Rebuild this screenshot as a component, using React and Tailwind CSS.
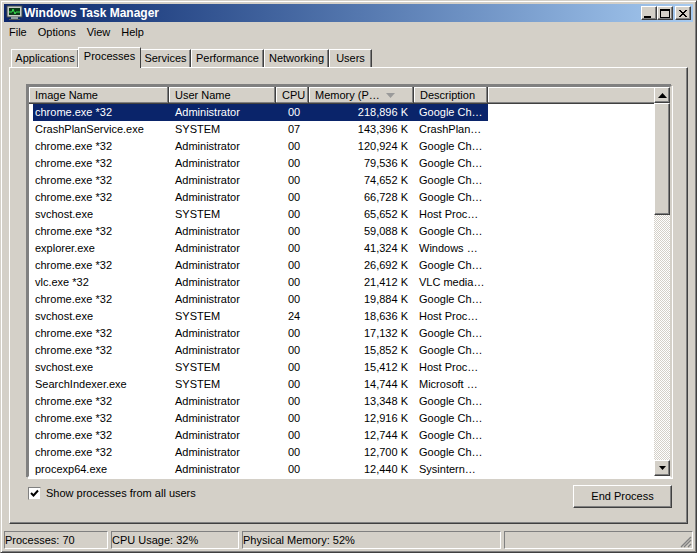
const C='chrome.exe *32',A='Administrator',S='SYSTEM',G='Google Ch…',H='Host Proc…';
const rows=[
[C,A,'00','218,896 K',G],['CrashPlanService.exe',S,'07','143,396 K','CrashPlan…'],[C,A,'00','120,924 K',G],[C,A,'00','79,536 K',G],[C,A,'00','74,652 K',G],[C,A,'00','66,728 K',G],
['svchost.exe',S,'00','65,652 K',H],[C,A,'00','59,088 K',G],['explorer.exe',A,'00','41,324 K','Windows …'],[C,A,'00','26,692 K',G],['vlc.exe *32',A,'00','21,412 K','VLC media…'],[C,A,'00','19,884 K',G],
['svchost.exe',S,'24','18,636 K',H],[C,A,'00','17,132 K',G],[C,A,'00','15,852 K',G],['svchost.exe',S,'00','15,412 K',H],['SearchIndexer.exe',S,'00','14,744 K','Microsoft …'],[C,A,'00','13,348 K',G],
[C,A,'00','12,916 K',G],[C,A,'00','12,744 K',G],[C,A,'00','12,700 K',G],['procexp64.exe',A,'00','12,440 K','Sysintern…']];
const raised='border border-t-white border-l-white border-r-[#404040] border-b-[#404040] shadow-[inset_-1px_-1px_0_#808080]';
const sunk='border border-t-[#808080] border-l-[#808080] border-r-white border-b-white';
function Cap({children}){return <div className={`w-4 h-[14px] bg-[#d4d0c8] flex items-center justify-center ${raised}`}>{children}</div>}
function Tab({w,active,children}){return <div className={active?`h-[21px] ${w} bg-[#d4d0c8] border border-b-0 border-t-white border-l-white border-r-[#404040] flex items-center justify-center -mx-px z-10 pb-[3px] relative top-px`:`h-[18px] ${w} bg-[#d4d0c8] border border-b-0 border-t-white border-l-white border-r-[#404040] shadow-[inset_-1px_0_0_#808080] flex items-center justify-center`}>{children}</div>}
function Head({w,children,right}){return <div className={`h-[17px] ${w} shrink-0 bg-[#d4d0c8] flex items-center justify-between pl-[6px] pr-[18px] pt-px border-r border-b border-r-[#404040] border-b-[#404040] shadow-[inset_-1px_-1px_0_#808080,inset_1px_1px_0_#fff] ${right||''}`}>{children}</div>}
export default function App(){return(
<div className="w-[697px] h-[553px] bg-[#d4d0c8] text-black text-[11px] leading-none flex flex-col overflow-hidden border border-t-[#d4d0c8] border-l-[#d4d0c8] border-r-[#404040] border-b-[#404040] shadow-[inset_1px_1px_0_#fff,inset_-1px_-1px_0_#808080] pt-[3px] px-[3px] pb-[3px]" style={{fontFamily:'"Liberation Sans",Arial,sans-serif'}}>
<div className="h-[18px] shrink-0 flex items-center justify-between bg-gradient-to-r from-[#0a246a] to-[#a6caf0] pl-[2px] pr-[2px]">
<div className="flex items-center gap-px">
<svg width="17" height="16" viewBox="0 0 17 16"><rect x="1" y="1" width="15" height="11" fill="#c8ccc8" stroke="#404848"/><rect x="3" y="3" width="11" height="7" fill="#0c3a18"/><path d="M3 7h3l1-3 2 5 1-2h4" fill="none" stroke="#38e050"/><rect x="5" y="12" width="7" height="2" fill="#90a0a0"/><rect x="3" y="14" width="11" height="1" fill="#505858"/></svg>
<span className="text-white font-bold text-[12px]">Windows Task Manager</span>
</div>
<div className="flex">
<Cap><span className="w-[7px] h-[2px] bg-black mt-[7px] -ml-1"/></Cap>
<Cap><span className="w-[10px] h-[9px] border border-black border-t-2"/></Cap>
<div className="ml-[2px]"><Cap><svg width="8" height="7" viewBox="0 0 8 7"><path d="M0 0l7 7M1 0l7 7M7 0L0 7M8 0L1 7" stroke="#000" strokeWidth="1"/></svg></Cap></div>
</div>
</div>
<div className="h-[19px] shrink-0 flex items-center gap-[11px] pl-[5px] pt-px"><span>File</span><span>Options</span><span>View</span><span>Help</span></div>
<div className="h-[7px] shrink-0"/>
<div className="h-[19px] shrink-0 flex items-end pl-[7px]">
<Tab w="w-[68px]">Applications</Tab><Tab w="w-[63px]" active>Processes</Tab><Tab w="w-[51px]">Services</Tab><Tab w="w-[73px]">Performance</Tab><Tab w="w-[65px]">Networking</Tab><Tab w="w-[43px]">Users</Tab>
</div>
<div className="w-[679px] h-[457px] shrink-0 ml-[5px] border border-t-white border-l-white border-r-[#404040] border-b-[#404040] shadow-[inset_-1px_-1px_0_#808080] pt-[17px] pl-[17px] flex flex-col">
<div className={`w-[645px] h-[393px] shrink-0 border-2 border-t-[#808080] border-l-[#808080] border-r-[#d4d0c8] border-b-white shadow-[-1px_-1px_0_#808080,1px_1px_0_#fff] flex bg-white`}>
<div className="flex-1 min-w-0 flex flex-col">
<div className="flex h-[17px] shrink-0 bg-[#d4d0c8]">
<Head w="w-[140px]">Image Name</Head><Head w="w-[107px]">User Name</Head><Head w="w-[33px]"><span>CPU</span></Head>
<Head w="w-[105px]" right="!pr-[18px]"><span>Memory (P…</span><svg width="9" height="5" viewBox="0 0 9 5"><path d="M0 0h9L4.5 5z" fill="#9a9a9a"/></svg></Head>
<Head w="w-[74px]">Description</Head><div className="flex-1 h-[17px] border-b border-b-[#404040] shadow-[inset_0_-1px_0_#808080,inset_1px_1px_0_#fff]"/>
</div>
<div className="flex-1 min-h-0 overflow-hidden pl-[4px]">
{rows.map((r,i)=><div key={i} className={`flex h-[17px] w-[455px] items-center ${i===0?'bg-[#0a246a] text-white':''}`}>
<span className="w-[136px] pl-[2px] shrink-0 whitespace-nowrap">{r[0]}</span>
<span className="w-[107px] pl-[6px] shrink-0">{r[1]}</span>
<span className="w-[33px] pl-[12px] shrink-0">{r[2]}</span>
<span className="w-[105px] pr-[6px] text-right shrink-0">{r[3]}</span>
<span className="w-[74px] pl-[5px] shrink-0 whitespace-nowrap">{r[4]}</span>
</div>)}
</div>
</div>
<div className="w-[16px] shrink-0 flex flex-col bg-[repeating-conic-gradient(#d4d0c8_0%_25%,#fff_0%_50%)] bg-[length:2px_2px]">
<div className={`h-[16px] shrink-0 bg-[#d4d0c8] flex items-center justify-center ${raised}`}><svg width="9" height="5" viewBox="0 0 9 5"><path d="M4.5 0L9 5H0z"/></svg></div>
<div className={`h-[112px] shrink-0 bg-[#d4d0c8] ${raised}`}/>
<div className="flex-1"/>
<div className={`h-[16px] shrink-0 bg-[#d4d0c8] flex items-center justify-center ${raised}`}><svg width="7" height="4" viewBox="0 0 7 4"><path d="M0 0h7L3.5 4z"/></svg></div>
</div>
</div>
<div className="flex items-start justify-between w-[644px] ml-px mt-[7px]">
<div className="flex items-center gap-[5px] mt-[2px]">
<span className={`w-[13px] h-[13px] bg-white flex items-center justify-center border border-t-[#808080] border-l-[#808080] border-r-[#d4d0c8] border-b-[#d4d0c8]`}><svg width="9" height="9" viewBox="0 0 9 9"><path d="M1 4l2.5 2.5L8 1.5" fill="none" stroke="#000" strokeWidth="2"/></svg></span>
<span>Show processes from all users</span>
</div>
<div className={`w-[99px] h-[23px] bg-[#d4d0c8] flex items-center justify-center ${raised}`}>End Process</div>
</div>
</div>
<div className="flex-1"/>
<div className="h-[18px] shrink-0 flex gap-[3px]">
<div className={`w-[104px] flex items-center ${sunk}`}>Processes: 70</div>
<div className={`w-[128px] flex items-center ${sunk}`}>CPU Usage: 32%</div>
<div className={`w-[259px] flex items-center ${sunk}`}>Physical Memory: 52%</div>
<div className={`w-[189px] relative ${sunk}`}><svg className="absolute right-0 bottom-0" width="13" height="13" viewBox="0 0 13 13"><path d="M12 2L2 12M12 5L5 12M12 9L9 12" stroke="#808080" strokeWidth="1.4"/></svg></div>
</div>
</div>)}
